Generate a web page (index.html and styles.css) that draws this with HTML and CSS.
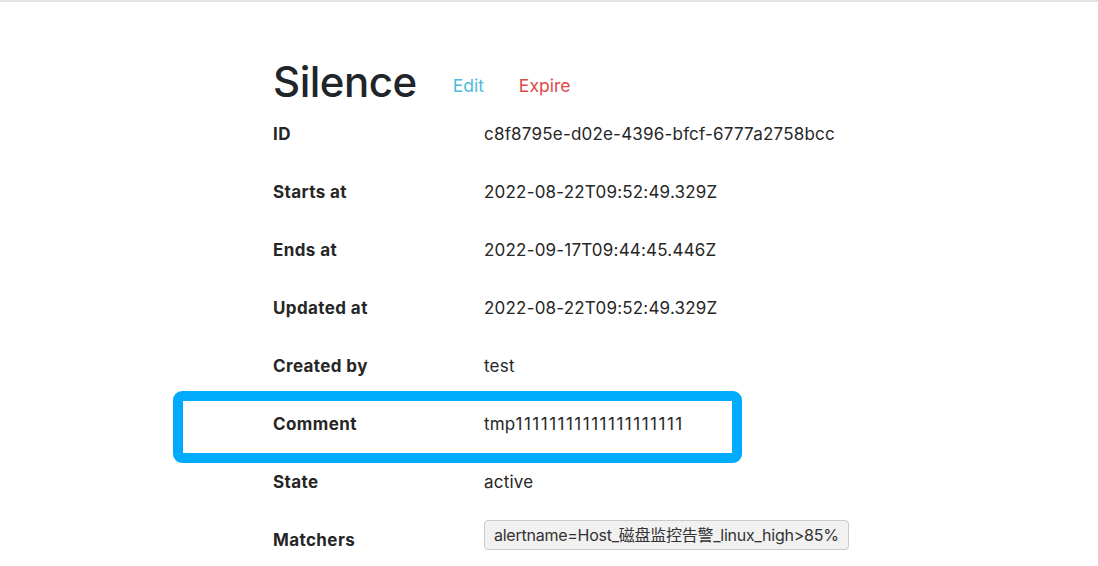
FILE: index.html
```html
<!DOCTYPE html>
<html lang="en">
<head>
<meta charset="utf-8">
<title>Silence</title>
<link rel="stylesheet" href="styles.css">
</head>
<body>
<div class="topbar"></div>
<main class="page">
  <header class="title-row">
    <h1 class="title">Silence</h1>
    <a class="action action-edit" href="#">Edit</a>
    <a class="action action-expire" href="#">Expire</a>
  </header>
  <div class="details">
    <div class="row"><div class="label">ID</div><div class="value">c8f8795e-d02e-4396-bfcf-6777a2758bcc</div></div>
    <div class="row"><div class="label">Starts at</div><div class="value">2022-08-22T09:52:49.329Z</div></div>
    <div class="row"><div class="label">Ends at</div><div class="value">2022-09-17T09:44:45.446Z</div></div>
    <div class="row"><div class="label">Updated at</div><div class="value">2022-08-22T09:52:49.329Z</div></div>
    <div class="row"><div class="label">Created by</div><div class="value">test</div></div>
    <div class="row"><div class="label">Comment</div><div class="value">tmp<span class="digits">11111111111111111111</span></div><div class="highlight-box"></div></div>
    <div class="row"><div class="label">State</div><div class="value">active</div></div>
    <div class="row"><div class="label">Matchers</div><div class="value"><span class="matcher">alertname=Host_磁盘监控告警_linux_high&gt;85%</span></div></div>
  </div>
</main>
</body>
</html>
```
FILE: styles.css
```css
html, body {
  margin: 0;
  padding: 0;
  background: #fff;
}
body {
  font-family: Inter, "Noto Sans CJK SC", sans-serif;
  color: #212529;
  font-size: 17px;
}
.topbar {
  height: 2px;
  background: #e2e2e2;
}
.page {
  padding-left: 273px;
  padding-top: 56px;
}
.title-row {
  display: flex;
  align-items: flex-start;
  height: 47px;
}
.title {
  margin: 0;
  font-size: 42px;
  font-weight: 500;
  line-height: 47px;
  letter-spacing: -0.5px;
}
.action {
  text-decoration: none;
  font-size: 17.5px;
  line-height: 22px;
  margin-top: 17px;
}
.action-edit {
  color: #4dbbdd;
  margin-left: 36px;
}
.action-expire {
  color: #dc4a4a;
  margin-left: 35px;
}
.details {
  display: flex;
  flex-direction: column;
}
.row {
  display: grid;
  grid-template-columns: 211px auto;
  align-items: center;
  height: 58px;
  position: relative;
}
.label {
  font-weight: 700;
  letter-spacing: 0.4px;
  color: #262626;
}
.value {
  font-weight: 400;
  letter-spacing: 0.2px;
  color: #262626;
}
.digits {
  letter-spacing: 1.5px;
}
.highlight-box {
  position: absolute;
  left: -100px;
  top: -4px;
  width: 549px;
  height: 52px;
  border: 10px solid #00abfd;
  border-radius: 9px;
}
.matcher {
  display: inline-block;
  padding: 0 9px;
  height: 28px;
  line-height: 28px;
  font-size: 16px;
  letter-spacing: -0.25px;
  background: #f1f1f1;
  border: 1px solid #cacaca;
  border-radius: 4px;
  color: #333;
  position: relative;
  top: -5px;
}
```
